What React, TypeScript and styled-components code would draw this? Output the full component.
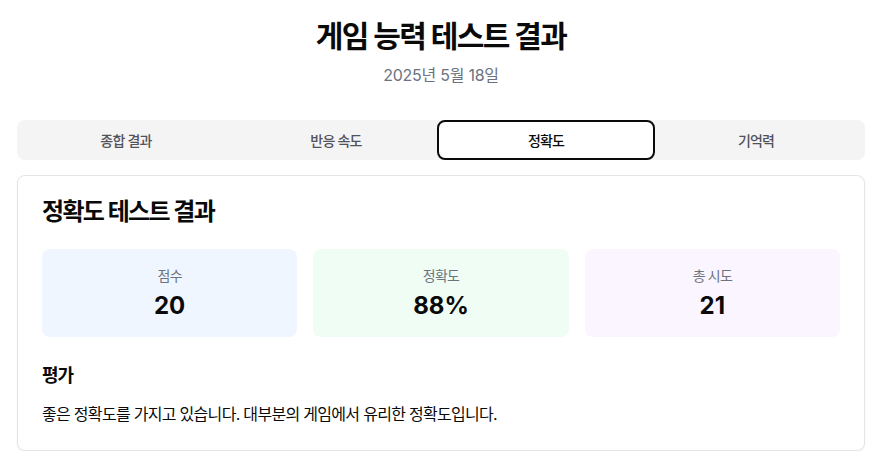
import React from "react";
import styled, { createGlobalStyle } from "styled-components";

const Global = createGlobalStyle`
  html, body { margin: 0; padding: 0; background: #ffffff; }
  body { font-family: Inter, "Noto Sans CJK KR", "Noto Sans", sans-serif; color: #0a0a0a; }
  * { box-sizing: border-box; }
`;

const Page = styled.div`
  width: 848px;
  margin-left: 17px;
  padding-top: 18px;
`;

const Header = styled.header`
  display: flex;
  flex-direction: column;
  align-items: center;
  margin-bottom: 33px;
`;

const Title = styled.h1`
  margin: 0 0 9px;
  font-size: 30px;
  line-height: 36px;
  font-weight: 700;
  letter-spacing: -1.6px;
  color: #0a0a0a;
`;

const DateText = styled.p`
  margin: 0;
  font-size: 16px;
  line-height: 24px;
  letter-spacing: -0.25px;
  color: #6b7280;
`;

const TabList = styled.div`
  display: grid;
  grid-template-columns: repeat(4, 1fr);
  height: 40px;
  padding: 0 4px;
  background: #f4f4f5;
  border-radius: 8px;
  margin-bottom: 15px;
`;

const Tab = styled.button<{ $active?: boolean }>`
  font-family: inherit;
  font-size: 14px;
  font-weight: 500;
  letter-spacing: -0.8px;
  border-radius: 8px;
  cursor: pointer;
  margin: ${(p) => (p.$active ? "0 -4px" : "0")};
  border: 2px solid ${(p) => (p.$active ? "#0a0a0a" : "transparent")};
  background: ${(p) => (p.$active ? "#ffffff" : "transparent")};
  color: ${(p) => (p.$active ? "#0a0a0a" : "#52525b")};
`;

const Card = styled.section`
  border: 1px solid #e4e4e7;
  border-radius: 8px;
  background: #ffffff;
  box-shadow: 0 1px 2px rgba(0, 0, 0, 0.05);
`;

const CardHeader = styled.div`
  padding: 24px 24px 25px;
`;

const CardTitle = styled.h2`
  margin: 0;
  font-size: 24px;
  line-height: 24px;
  font-weight: 600;
  letter-spacing: -1.65px;
`;

const CardContent = styled.div`
  padding: 0 24px 24px;
`;

const StatGrid = styled.div`
  display: grid;
  grid-template-columns: repeat(3, 1fr);
  gap: 16px;
`;

const StatBox = styled.div<{ $bg: string }>`
  background: ${(p) => p.$bg};
  border-radius: 8px;
  padding: 17px 16px 15px;
  display: flex;
  flex-direction: column;
  align-items: center;
`;

const StatLabel = styled.div`
  font-size: 14px;
  line-height: 20px;
  letter-spacing: -0.8px;
  color: #6b7280;
  margin-bottom: 4px;
`;

const StatValue = styled.div`
  font-size: 24px;
  line-height: 32px;
  font-weight: 700;
`;

const SectionTitle = styled.h3`
  margin: 25px 0 12px;
  font-size: 18px;
  line-height: 28px;
  font-weight: 600;
  letter-spacing: -1.1px;
`;

const Body = styled.p`
  margin: 0;
  font-size: 16px;
  line-height: 24px;
  letter-spacing: -0.7px;
`;

const stats = [
  { label: "점수", value: "20", bg: "#eff6ff" },
  { label: "정확도", value: "88%", bg: "#f0fdf4" },
  { label: "총 시도", value: "21", bg: "#faf5ff" },
];

const tabs = ["종합 결과", "반응 속도", "정확도", "기억력"];

export default function App() {
  return (
    <>
      <Global />
      <Page>
        <Header>
          <Title>게임 능력 테스트 결과</Title>
          <DateText>2025년 5월 18일</DateText>
        </Header>
        <TabList>
          {tabs.map((t) => (
            <Tab key={t} $active={t === "정확도"}>
              {t}
            </Tab>
          ))}
        </TabList>
        <Card>
          <CardHeader>
            <CardTitle>정확도 테스트 결과</CardTitle>
          </CardHeader>
          <CardContent>
            <StatGrid>
              {stats.map((s) => (
                <StatBox key={s.label} $bg={s.bg}>
                  <StatLabel>{s.label}</StatLabel>
                  <StatValue>{s.value}</StatValue>
                </StatBox>
              ))}
            </StatGrid>
            <SectionTitle>평가</SectionTitle>
            <Body>좋은 정확도를 가지고 있습니다. 대부분의 게임에서 유리한 정확도입니다.</Body>
          </CardContent>
        </Card>
      </Page>
    </>
  );
}
